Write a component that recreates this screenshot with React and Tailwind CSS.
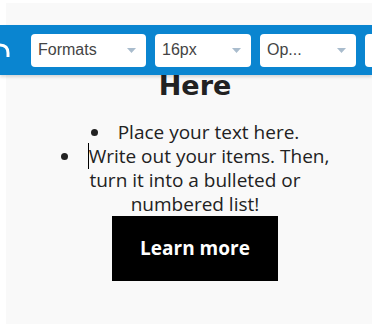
import React from "react";

const SELECTS = [
    { label: "Formats", width: "w-[115px]" },
    { label: "16px", width: "w-[96px]" },
    { label: "Op...", width: "w-[96px]" },
];

function Caret() {
    return (
        <svg width="9" height="5" viewBox="0 0 9 5" className="shrink-0">
            <path d="M0 0 L9 0 L4.5 5 Z" fill="#a9bccd" />
        </svg>
    );
}

export default function App() {
    return (
        <div className="relative w-[372px] h-[324px] bg-white overflow-hidden font-['Open_Sans',sans-serif]">
            <div className="ml-[6px] mt-[3px] w-[366px] h-[321px] bg-[#f9f9f9] pl-[12px] flex flex-col items-center pt-[66px]">
                <h1 className="text-[27px] leading-[34px] font-bold text-[#222] font-['DejaVu_Sans',sans-serif]">
                    Here
                </h1>
                <ul className="mt-[17px] w-[290px] list-disc list-inside text-center text-[19px] leading-[24px] text-[#222]">
                    <li>Place your text here.</li>
                    <li>
                        <span className="border-l border-black">Write</span> out your items. Then, turn it into a bulleted or numbered list!
                    </li>
                </ul>
                <button className="w-[166px] h-[65px] bg-black text-white text-[19px] font-bold">
                    Learn more
                </button>
            </div>

            <div className="absolute top-[25px] left-0 w-full h-[50px] bg-[#0a85d0] shadow-[0_2px_3px_rgba(0,0,0,0.15)] flex items-center gap-[9px] pl-[31px]">
                <svg width="14" height="20" viewBox="0 0 14 20" className="absolute left-[-3px] top-[15px]">
                    <path d="M2 5 C8 5 11 8 11 13 L11 17" stroke="white" strokeWidth="3" fill="none" />
                </svg>
                {SELECTS.map((s) => (
                    <div
                        key={s.label}
                        className={`${s.width} h-[33px] bg-white rounded-[4px] flex items-center justify-between pl-[7px] pr-[10px] shrink-0`}
                    >
                        <span className="text-[16px] text-[#444] font-['Liberation_Sans',sans-serif]">
                            {s.label}
                        </span>
                        <Caret />
                    </div>
                ))}
                <div className="w-[40px] h-[33px] bg-white rounded-[4px] shrink-0" />
            </div>
        </div>
    );
}
